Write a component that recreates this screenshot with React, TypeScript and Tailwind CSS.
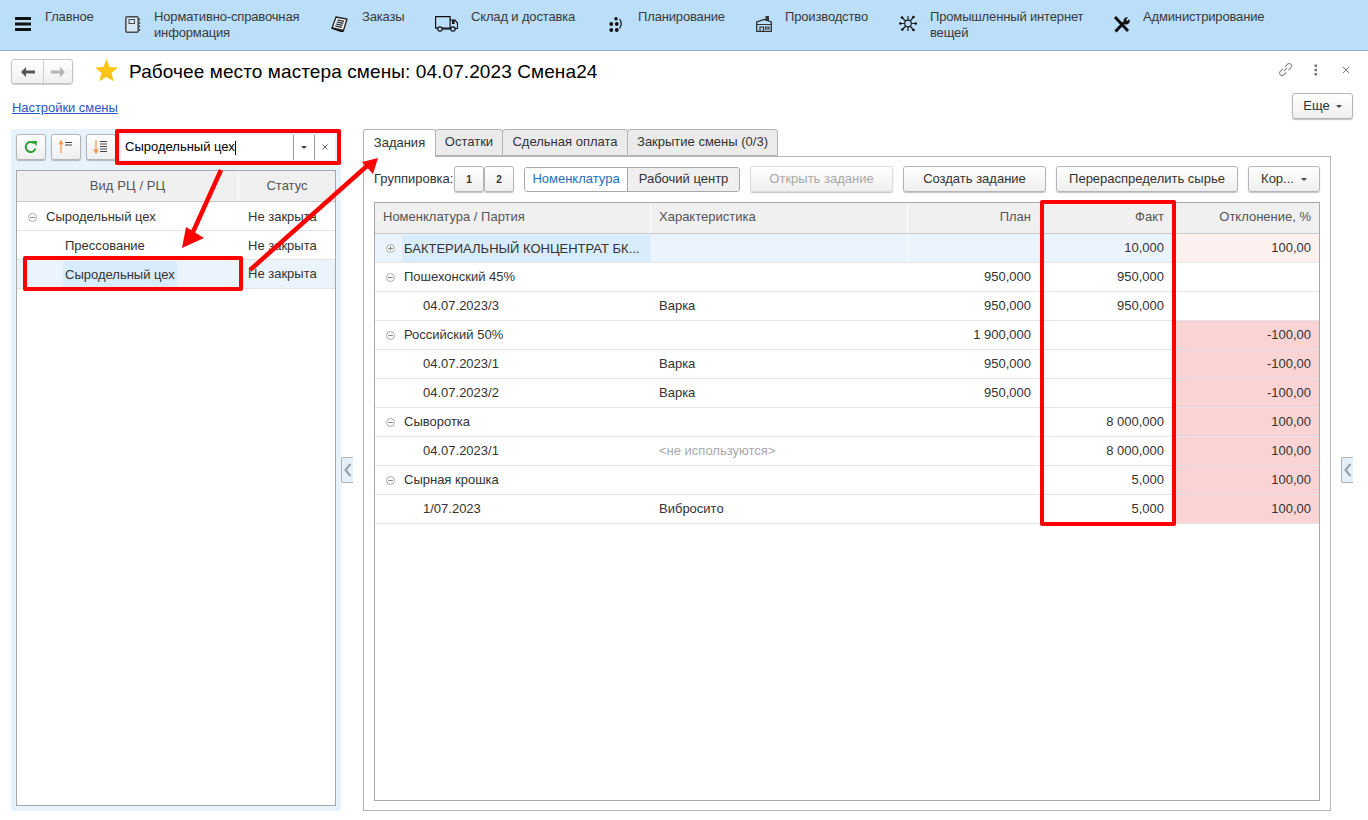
import React from "react";

const btn = "flex items-center justify-center h-[26px] border border-[#b5b5b5] rounded-[3px] bg-linear-to-b from-white to-[#efefef] shadow-[0_1px_1px_rgba(0,0,0,0.25)] text-[#333]";

const I = ({ children, w = 18, h = 18 }: { children: React.ReactNode; w?: number; h?: number }) => (
  <svg width={w} height={h} viewBox={`0 0 ${w} ${h}`} fill="none" className="shrink-0">{children}</svg>
);

const Burger = () => (
  <I w={16} h={14}><rect y="0" width="16" height="3" fill="#111" /><rect y="5.500" width="16" height="3" fill="#111" /><rect y="11" width="16" height="3" fill="#111" /></I>
);
const Book = () => (
  <I w={16} h={17}><rect x="0.800" y="0.800" width="12.400" height="15.400" rx="1.500" stroke="#4a4a4a" strokeWidth="1.500" fill="#d5e6f5" /><rect x="4" y="3.500" width="5.500" height="4" stroke="#4a4a4a" /><path d="M14.500 2.500v2M14.500 6v2M14.500 9.500v2M14.500 13v2" stroke="#4a4a4a" strokeWidth="1.200" /></I>
);
const Orders = () => (
  <I w={17} h={16}><path d="M5 1 16 3 12.500 14.500 1 12Z" fill="#e8eef3" stroke="#222" strokeWidth="1.300" /><path d="M6.500 4 13 5.300M5.800 6 12.300 7.300M5 8 11.500 9.300M4.200 10 10.800 11.300" stroke="#222" strokeWidth="1.200" /><path d="M0.800 12 11 15.500 12.500 14.500" stroke="#111" strokeWidth="1.800" /></I>
);
const Truck = () => (
  <I w={23} h={16}><path d="M0.600 0.600h14.500v11.500H0.600Z" stroke="#111" strokeWidth="1.200" /><path d="M15 4h5l2.500 3v5.500h-3" stroke="#111" strokeWidth="1.200" /><path d="M17 4h2.500v4H17Z" fill="#111" /><circle cx="5" cy="13" r="2.200" fill="#bbdef9" stroke="#111" strokeWidth="1.200" /><circle cx="18" cy="13" r="2.200" fill="#bbdef9" stroke="#111" strokeWidth="1.200" /><path d="M7.500 13H15.500" stroke="#111" strokeWidth="1.200" /></I>
);
const Dots = () => (
  <I w={14} h={16}><g fill="#111"><circle cx="7" cy="2.700" r="1.700" /><circle cx="2.300" cy="8" r="1.900" /><circle cx="7.800" cy="8" r="1.900" /><circle cx="2.300" cy="14" r="1.900" /><circle cx="7.800" cy="14" r="1.900" /></g><path d="M10.500 3q3.500 4.500 0 9.500" stroke="#111" strokeWidth="1.200" /></I>
);
const Factory = () => (
  <I w={16} h={16}><path d="M0.700 15.300V6L8 3.500 15.300 6v9.300Z" fill="#bbdef9" stroke="#333" strokeWidth="1.300" /><rect x="9.500" y="0" width="3.500" height="5" fill="#333" /><path d="M0.700 8.500h14.600M4 15V11h3.500v4M9.500 11H13v2H9.500Z" stroke="#333" strokeWidth="1.200" /></I>
);
const IoT = () => (
  <I w={18} h={17}><g stroke="#222" strokeWidth="1.200"><path d="M9 8.500 3 2.500M9 8.500l5.500-6.500M9 8.500H1M9 8.500h8M9 8.500l-5.500 6M9 8.500l5.500 6.500M9 8.500V1M9 8.500V16" /></g><circle cx="9" cy="8.500" r="3.300" fill="#bbdef9" stroke="#222" strokeWidth="1.200" /><g fill="#111"><circle cx="3" cy="2.500" r="1.300" /><circle cx="14.500" cy="2" r="1.300" /><circle cx="1.300" cy="8.500" r="1.300" /><circle cx="16.700" cy="8.500" r="1.300" /><circle cx="3.300" cy="14.500" r="1.300" /><circle cx="14.500" cy="15" r="1.300" /></g></I>
);
const Tools = () => (
  <I w={17} h={17}><path d="M2 1 15 15" stroke="#111" strokeWidth="3" /><path d="M11 6.500 2.500 15.500" stroke="#111" strokeWidth="3" /><path d="M10.500 5.500a3.500 3.500 0 0 1 4.500-4l-2 2.200 1 1.300 2.300-1.700A3.500 3.500 0 0 1 11.500 8Z" fill="#111" /></I>
);
const Refresh = () => (
  <I w={14} h={14}><path d="M11.500 8.500A5 5 0 1 1 10 3.200" stroke="#2f9e36" strokeWidth="2" /><path d="M8 0.800 13 1 12.600 6Z" fill="#2f9e36" /></I>
);
const SortUp = () => (
  <I w={16} h={14}><path d="M3 13V2M1 4.500 3 1l2 3.500" stroke="#ef8a3c" strokeWidth="1.100" /><path d="M7 2.500h7M7 5h7" stroke="#444" strokeWidth="1.200" /></I>
);
const SortDown = () => (
  <I w={16} h={16}><path d="M3 1v12M1 10l2 4 2-4" stroke="#ef8a3c" strokeWidth="1.100" /><path d="M7 2.500h7M7 5h7M7 7.500h7M7 10h7M7 12.500h7" stroke="#444" /></I>
);
const Minus = () => (
  <svg width="9" height="9" viewBox="0 0 9 9" className="shrink-0"><circle cx="4.500" cy="4.500" r="4" fill="#fff" stroke="#a8a8a8" /><path d="M2 4.500h5" stroke="#888" /></svg>
);
const Plus = () => (
  <svg width="9" height="9" viewBox="0 0 9 9" className="shrink-0"><circle cx="4.500" cy="4.500" r="4" fill="#fff" stroke="#a8a8a8" /><path d="M2 4.500h5M4.500 2v5" stroke="#888" /></svg>
);
const Caret = () => <span className="w-0 h-0 border-x-[3px] border-x-transparent border-t-[3px] border-t-[#444]" />;

const menu: { icon: React.ReactNode; text: React.ReactNode; w: string; iw: string; top: string }[] = [
  { icon: <Burger />, text: "Главное", w: "w-[110px]", iw: "w-[30px]", top: "mt-[17px]" },
  { icon: <Book />, text: <>Нормативно-справочная<br />информация</>, w: "w-[206px]", iw: "w-[29px]", top: "mt-[16px]" },
  { icon: <Orders />, text: "Заказы", w: "w-[104px]", iw: "w-[31px]", top: "mt-[16px]" },
  { icon: <Truck />, text: "Склад и доставка", w: "w-[174px]", iw: "w-[36px]", top: "mt-[16px]" },
  { icon: <Dots />, text: "Планирование", w: "w-[147px]", iw: "w-[29px]", top: "mt-[16px]" },
  { icon: <Factory />, text: "Производство", w: "w-[143px]", iw: "w-[29px]", top: "mt-[16px]" },
  { icon: <IoT />, text: <>Промышленный интернет<br />вещей</>, w: "w-[214px]", iw: "w-[31px]", top: "mt-[15px]" },
  { icon: <Tools />, text: "Администрирование", w: "w-[200px]", iw: "w-[30px]", top: "mt-[16px]" },
];

type Row = { a: string; lvl: 0 | 1; kind?: "plus" | "minus"; b?: string; muted?: boolean; plan?: string; fact?: string; dev?: string; tone?: "pink" | "lite"; sel?: boolean };
const rows: Row[] = [
  { a: "БАКТЕРИАЛЬНЫЙ КОНЦЕНТРАТ БК...", lvl: 0, kind: "plus", fact: "10,000", dev: "100,00", tone: "lite", sel: true },
  { a: "Пошехонский 45%", lvl: 0, kind: "minus", plan: "950,000", fact: "950,000" },
  { a: "04.07.2023/3", lvl: 1, b: "Варка", plan: "950,000", fact: "950,000" },
  { a: "Российский 50%", lvl: 0, kind: "minus", plan: "1 900,000", dev: "-100,00", tone: "pink" },
  { a: "04.07.2023/1", lvl: 1, b: "Варка", plan: "950,000", dev: "-100,00", tone: "pink" },
  { a: "04.07.2023/2", lvl: 1, b: "Варка", plan: "950,000", dev: "-100,00", tone: "pink" },
  { a: "Сыворотка", lvl: 0, kind: "minus", fact: "8 000,000", dev: "100,00", tone: "pink" },
  { a: "04.07.2023/1", lvl: 1, b: "<не используются>", muted: true, fact: "8 000,000", dev: "100,00", tone: "pink" },
  { a: "Сырная крошка", lvl: 0, kind: "minus", fact: "5,000", dev: "100,00", tone: "pink" },
  { a: "1/07.2023", lvl: 1, b: "Вибросито", fact: "5,000", dev: "100,00", tone: "pink" },
];

const cols = "grid grid-cols-[276px_257px_132px_133px_146px]";

const Collapser = ({ right }: { right?: boolean }) => (
  <div className={`w-[12px] h-[26px] mt-[328px] border border-r-0 border-[#b0b0b0] rounded-l-[2px] bg-[#e6f0fb] flex items-center justify-center ${right ? "ml-[10px]" : ""}`}>
    <svg width="8" height="14" viewBox="0 0 8 14"><path d="M6.500 1 1.500 7l5 6" stroke="#9aa3ab" strokeWidth="2.200" fill="none" /></svg>
  </div>
);

export default function App() {
  return (
    <div className="relative w-[1368px] h-[820px] overflow-hidden bg-white font-['Liberation_Sans',Arial,sans-serif] text-[13px] text-[#333]">
      {/* Top menu */}
      <div className="h-[51px] pl-[15px] bg-[#bbdef9] border-b border-[#8fb2cf] flex items-start leading-[16px] text-[#3a3a3a] tracking-[-0.15px]">
        {menu.map((m, i) => (
          <div key={i} className={`flex items-start shrink-0 ${m.w}`}>
            <div className={`shrink-0 ${m.iw} ${m.top}`}>{m.icon}</div>
            <div className="mt-[9px] whitespace-nowrap">{m.text}</div>
          </div>
        ))}
      </div>

      {/* Title row */}
      <div className="h-[42px] flex items-start pl-[11px] pr-[18px]">
        <div className="mt-[8px] flex h-[25px] w-[62px] border border-[#c4c4c4] rounded-[3px] bg-linear-to-b from-white to-[#efefef] shadow-[0_1px_1px_rgba(0,0,0,0.2)]">
          <div className="w-[32px] flex items-center justify-center border-r border-[#d0d0d0]">
            <svg width="14" height="10" viewBox="0 0 14 10"><path d="M0 5l5-5v3.400h9v3.200H5V10Z" fill="#555" /></svg>
          </div>
          <div className="flex-1 flex items-center justify-center">
            <svg width="14" height="10" viewBox="0 0 14 10"><path d="M14 5 9 0v3.400H0v3.200h9V10Z" fill="#b5b5b5" /></svg>
          </div>
        </div>
        <svg width="23" height="23" viewBox="0 0 22 22" className="ml-[22px] mt-[8px] shrink-0"><path d="M11 0l3 7.600 8 .6-6.100 5.200 1.900 8L11 17.200 4.200 21.400l1.900-8L0 8.200l8-.6Z" fill="#fcc419" /></svg>
        <div className="ml-[11px] mt-[8px] text-[19px] leading-[26px] text-black tracking-[0.1px] whitespace-nowrap">Рабочее место мастера смены: 04.07.2023 Смена24</div>
        <div className="ml-auto flex items-center mt-[10px]">
          <svg width="17" height="17" viewBox="0 0 16 16" fill="none" stroke="#888" strokeWidth="1"><path d="M6.500 9.500l3-3M5.500 7.500 2.800 10.200a2.300 2.300 0 0 0 3.200 3.200L8.700 10.700M7.500 5.500 10.200 2.800a2.300 2.300 0 0 1 3.200 3.200L10.700 8.700" /></svg>
          <svg width="4" height="12" viewBox="0 0 4 12" className="ml-[20px]"><g fill="#777"><rect x="0.500" y="0.500" width="2.500" height="2.500" /><rect x="0.500" y="4.700" width="2.500" height="2.500" /><rect x="0.500" y="9" width="2.500" height="2.500" /></g></svg>
          <svg width="8" height="8" viewBox="0 0 8 8" className="ml-[24px]"><path d="M1 1l6 6M7 1 1 7" stroke="#777" /></svg>
        </div>
      </div>

      {/* Link row */}
      <div className="h-[36px] flex items-start pl-[12px] pr-[15px]">
        <a className="mt-[7px] leading-[16px] text-[#2b55c4] underline tracking-[-0.05px]">Настройки смены</a>
        <div className={`${btn} ml-auto w-[61px] gap-[6px]`}><span>Еще</span><Caret /></div>
      </div>

      {/* Main */}
      <div className="flex items-start pl-[11px]">
        <div className="w-[330px] h-[682px] bg-[#e8f2fc] p-[5px] flex flex-col">
          <div className="h-[26px] flex items-center">
            <div className={`${btn} w-[30px]`}><Refresh /></div>
            <div className={`${btn} w-[30px] ml-[5px]`}><SortUp /></div>
            <div className={`${btn} w-[30px] ml-[5px]`}><SortDown /></div>
            <div className="ml-[5px] w-[214px] h-[25px] bg-white flex items-center text-black">
              <span className="pl-[4px] flex-1">Сыродельный цех<span className="inline-block w-px h-[14px] bg-black align-middle" /></span>
              <div className="w-[21px] h-[25px] border-l border-[#999] flex items-center justify-center"><Caret /></div>
              <div className="w-[21px] h-[25px] border-l border-[#999] flex items-center justify-center">
                <svg width="6" height="6" viewBox="0 0 6 6"><path d="M0.500 0.500l5 5M5.500 0.500l-5 5" stroke="#666" /></svg>
              </div>
            </div>
          </div>
          <div className="mt-[10px] flex-1 border border-[#a8a8a8] bg-white">
            <div className="grid grid-cols-[222px_1fr] h-[31px] bg-[#f0f0f0] border-b border-[#c8c8c8] items-center text-[#555]">
              <div className="h-full flex items-center justify-center border-r border-white tracking-[0.1px]">Вид РЦ / РЦ</div>
              <div className="h-full flex items-center justify-center">Статус</div>
            </div>
            {[
              { t: "Сыродельный цех", top: true },
              { t: "Прессование" },
              { t: "Сыродельный цех", sel: true },
            ].map((r, i) => (
              <div key={i} className={`grid grid-cols-[222px_1fr] h-[29px] border-b border-[#e4e4e4] items-center ${r.sel ? "bg-[#ebf4fc]" : ""}`}>
                <div className={`flex items-center ${r.top ? "pl-[11px] gap-[9px]" : "pl-[48px]"} ${r.sel ? "" : "pt-[2px]"}`}>
                  {r.top && <Minus />}
                  <span className={r.sel ? "bg-[#d9ecfb] h-[27px] leading-[27px] px-[2px] -ml-[2px]" : ""}>{r.t}</span>
                </div>
                <div className={`pl-[9px] ${r.sel ? "" : "pt-[2px]"}`}>Не закрыта</div>
              </div>
            ))}
          </div>
        </div>

        <Collapser />

        <div className="ml-[10px] w-[968px] h-[682px] flex flex-col">
          <div className="flex h-[28px] relative z-10">
            {["Задания", "Остатки", "Сдельная оплата", "Закрытие смены (0/3)"].map((t, i) => (
              <div key={t} className={`flex items-center justify-center border border-[#b5b5b5] rounded-t-[3px] pb-[2px] ${i > 0 ? "h-[27px] -ml-px bg-[#ebebeb]" : "h-[28px] border-b-0 bg-white"} ${["w-[73px]", "w-[68px]", "w-[126px]", "w-[151px]"][i]}`}>{t}</div>
            ))}
          </div>
          <div className="-mt-px flex-1 border border-[#b5b5b5] px-[10px] pt-[9px] flex flex-col">
            <div className="h-[26px] flex items-center">
              <span className="w-[80px] whitespace-nowrap">Группировка:</span>
              <div className={`${btn} w-[30px] font-bold text-[10px]`}>1</div>
              <div className={`${btn} w-[30px] font-bold text-[10px]`}>2</div>
              <div className="ml-[10px] flex h-[25px] border border-[#a8a8a8] rounded-[3px] overflow-hidden">
                <div className="w-[103px] bg-white text-[#1e6fbf] flex items-center justify-center border-r border-[#a8a8a8]">Номенклатура</div>
                <div className="w-[111px] bg-[#efefef] flex items-center justify-center">Рабочий центр</div>
              </div>
              <div className={`${btn} ml-[10px] w-[143px] text-[#a8a8a8] border-[#dcdcdc]`}>Открыть задание</div>
              <div className={`${btn} ml-[10px] w-[143px]`}>Создать задание</div>
              <div className={`${btn} ml-[10px] w-[182px]`}>Перераспределить сырье</div>
              <div className={`${btn} ml-[10px] w-[72px] gap-[7px]`}><span>Кор...</span><Caret /></div>
            </div>
            <div className="mt-[10px] flex-1 mb-[9px] border border-[#a8a8a8]">
              <div className={`${cols} h-[31px] bg-[#f0f0f0] border-b border-[#c8c8c8] items-center text-[#555]`}>
                <div className="h-full flex items-center pl-[8px] pb-[2px] border-r border-white">Номенклатура / Партия</div>
                <div className="h-full flex items-center pl-[8px] pb-[2px] border-r border-white">Характеристика</div>
                <div className="h-full flex items-center justify-end pr-[9px] pb-[2px]">План</div>
                <div className="h-full flex items-center justify-end pr-[9px] pb-[2px]">Факт</div>
                <div className="h-full flex items-center justify-end pr-[8px] pb-[2px]">Отклонение, %</div>
              </div>
              {rows.map((r, i) => (
                <div key={i} className={`${cols} h-[29px] border-b border-[#e4e4e4] items-center ${r.sel ? "bg-[#ebf4fc]" : ""}`}>
                  <div className={`h-full flex items-center ${r.lvl ? "pl-[48px]" : "pl-[11px] gap-[9px]"}`}>
                    {r.kind === "plus" && <Plus />}
                    {r.kind === "minus" && <Minus />}
                    <span className={r.sel ? "bg-[#d9ecfb] h-[27px] leading-[27px] flex-1 px-[2px] -ml-[2px] mr-px whitespace-nowrap" : "whitespace-nowrap"}>{r.a}</span>
                  </div>
                  <div className={`h-full flex items-center pl-[8px] ${r.muted ? "text-[#a8a8a8]" : ""} ${r.sel ? "border-r border-white" : ""}`}>{r.b ?? ""}</div>
                  <div className="text-right pr-[9px]">{r.plan ?? ""}</div>
                  <div className="text-right pr-[9px]">{r.fact ?? ""}</div>
                  <div className={`h-full flex items-center justify-end pr-[8px] ${r.tone === "pink" ? "bg-[#fad4d4]" : r.tone === "lite" ? "bg-[#fdf1ef]" : ""}`}>{r.dev ?? ""}</div>
                </div>
              ))}
            </div>
          </div>
        </div>

        <Collapser right />
      </div>

      {/* Red annotations over the page */}
      <div className="absolute left-[115px] top-[129px] w-[226px] h-[36px] border-[4px] border-[#fe0000] rounded-[2px]" />
      <div className="absolute left-[23px] top-[256px] w-[220px] h-[35px] border-[4px] border-[#fe0000] rounded-[2px]" />
      <div className="absolute left-[1040px] top-[200px] w-[136px] h-[326px] border-[4px] border-[#fe0000] rounded-[2px]" />
      <svg className="absolute left-0 top-0 pointer-events-none" width="1368" height="820" viewBox="0 0 1368 820">
        <path d="M221 170 193 232" stroke="#fe0000" strokeWidth="4.500" />
        <path d="M182 248 186 227 204 238Z" fill="#fe0000" />
        <path d="M250 270 368 165" stroke="#fe0000" strokeWidth="4.500" />
        <path d="M378 158 362 162 373 174Z" fill="#fe0000" />
      </svg>
    </div>
  );
}
